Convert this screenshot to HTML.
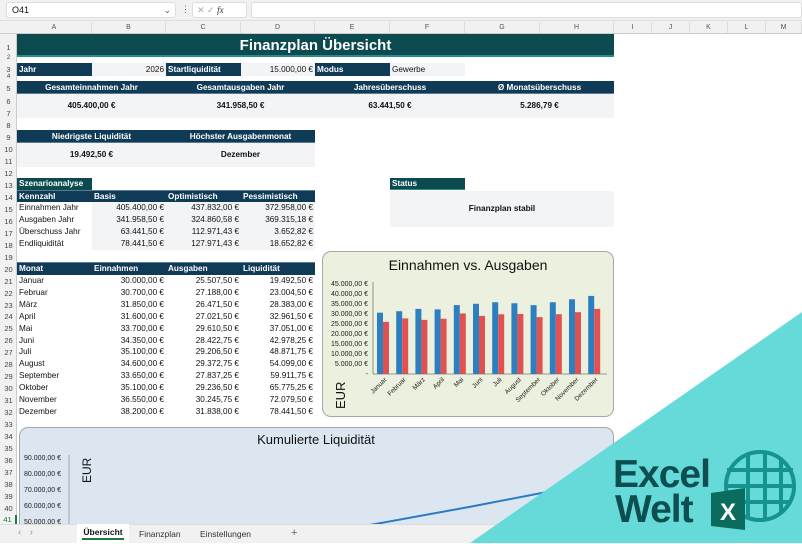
<!DOCTYPE html>
<html><head><meta charset="utf-8">
<style>
*{margin:0;padding:0;box-sizing:border-box}
body{width:802px;height:543px;overflow:hidden;background:#fff;font-family:"Liberation Sans",sans-serif;position:relative;font-size:8.2px;color:#111}
.a{position:absolute;white-space:nowrap}
.hd{background:#0f3b57;color:#fff;font-weight:bold}
.tl{background:#0b4a4f;color:#fff;font-weight:bold}
.g{background:#f3f4f6}
.r{text-align:right}
.c{text-align:center}
.rn{position:absolute;left:0;width:17px;text-align:center;font-size:7.5px;color:#444}
.ch{position:absolute;top:22px;height:11px;font-size:7px;color:#555;text-align:center;border-right:1px solid #ddd;line-height:11px}
</style></head><body>
<div class="a" style="left:0;top:0;width:802px;height:21px;background:#f1f1f1;border-bottom:1px solid #ddd"></div>
<div class="a" style="left:6px;top:2px;width:170px;height:16px;background:#fff;border:1px solid #ddd;border-radius:3px;font-size:9px;line-height:14px;padding-left:5px">O41<span style="position:absolute;right:4px;color:#555">&#8964;</span></div>
<div class="a" style="left:181px;top:4px;font-size:9px;color:#666">&#8942;</div>
<div class="a" style="left:192px;top:2px;width:55px;height:16px;background:#fff;border:1px solid #ddd;border-radius:3px;font-size:9px;line-height:14px;color:#aaa;padding-left:4px">✕ ✓ <i style="color:#333;font-family:'Liberation Serif'">fx</i></div>
<div class="a" style="left:251px;top:2px;width:551px;height:16px;background:#fff;border:1px solid #ddd;border-radius:3px"></div>
<div class="a" style="left:0;top:21px;width:802px;height:13px;background:#f1f1f1;border-bottom:1px solid #ccc"></div>
<div class="ch" style="left:17px;width:75px">A</div><div class="ch" style="left:92px;width:74px">B</div><div class="ch" style="left:166px;width:75px">C</div><div class="ch" style="left:241px;width:74px">D</div><div class="ch" style="left:315px;width:75px">E</div><div class="ch" style="left:390px;width:75px">F</div><div class="ch" style="left:465px;width:75px">G</div><div class="ch" style="left:540px;width:74px">H</div><div class="ch" style="left:614px;width:38px">I</div><div class="ch" style="left:652px;width:38px">J</div><div class="ch" style="left:690px;width:38px">K</div><div class="ch" style="left:728px;width:38px">L</div><div class="ch" style="left:766px;width:36px">M</div>
<div class="a" style="left:0;top:34px;width:17px;height:490px;background:#f1f1f1;border-right:1px solid #ccc"></div>
<div class="rn" style="top:43px">1</div><div class="rn" style="top:55px;font-size:6px">2</div><div class="rn" style="top:65px">3</div><div class="rn" style="top:74px;font-size:6px">4</div><div class="rn" style="top:84px">5</div><div class="rn" style="top:97px">6</div><div class="rn" style="top:109px">7</div><div class="rn" style="top:121px">8</div><div class="rn" style="top:133px">9</div><div class="rn" style="top:145px">10</div><div class="rn" style="top:157px">11</div><div class="rn" style="top:169px">12</div>
<div class="rn" style="top:181px">13</div><div class="rn" style="top:193px">14</div><div class="rn" style="top:205px">15</div><div class="rn" style="top:217px">16</div><div class="rn" style="top:229px">17</div><div class="rn" style="top:241px">18</div><div class="rn" style="top:253px">19</div><div class="rn" style="top:265px">20</div><div class="rn" style="top:277px">21</div><div class="rn" style="top:289px">22</div><div class="rn" style="top:301px">23</div><div class="rn" style="top:312px">24</div><div class="rn" style="top:324px">25</div><div class="rn" style="top:336px">26</div><div class="rn" style="top:348px">27</div><div class="rn" style="top:360px">28</div><div class="rn" style="top:372px">29</div><div class="rn" style="top:384px">30</div><div class="rn" style="top:396px">31</div><div class="rn" style="top:408px">32</div><div class="rn" style="top:420px">33</div><div class="rn" style="top:432px">34</div><div class="rn" style="top:444px">35</div><div class="rn" style="top:456px">36</div><div class="rn" style="top:468px">37</div><div class="rn" style="top:480px">38</div><div class="rn" style="top:492px">39</div><div class="rn" style="top:504px">40</div><div class="rn" style="top:515px;color:#1b7a3f;border-right:2px solid #1b7a3f">41</div>

<div class="a tl" style="left:17px;top:34px;width:597px;height:23px;font-size:15px;line-height:23px;text-align:center;border-bottom:2px solid #2a8c8c">Finanzplan Übersicht</div>
<div class="a g" style="left:17px;top:63px;width:448px;height:13px"></div>
<div class="a hd" style="left:17px;top:63px;width:75px;height:13px;line-height:13px;padding-left:2px">Jahr</div>
<div class="a r" style="left:92px;top:63px;width:72px;line-height:13px">2026</div>
<div class="a hd" style="left:166px;top:63px;width:75px;height:13px;line-height:13px;padding-left:2px">Startliquidität</div>
<div class="a r" style="left:241px;top:63px;width:72px;line-height:13px">15.000,00 €</div>
<div class="a hd" style="left:315px;top:63px;width:75px;height:13px;line-height:13px;padding-left:2px">Modus</div>
<div class="a" style="left:392px;top:63px;line-height:13px">Gewerbe</div>
<div class="a hd c" style="left:17px;top:81px;width:597px;height:13px;line-height:13px;border-bottom:1px solid #5a7a90"></div>
<div class="a g" style="left:17px;top:94px;width:597px;height:24px"></div>
<div class="a c" style="left:17px;top:82px;width:149px;color:#fff;font-weight:bold;line-height:12px">Gesamteinnahmen Jahr</div>
<div class="a c" style="left:166px;top:82px;width:149px;color:#fff;font-weight:bold;line-height:12px">Gesamtausgaben Jahr</div>
<div class="a c" style="left:315px;top:82px;width:150px;color:#fff;font-weight:bold;line-height:12px">Jahresüberschuss</div>
<div class="a c" style="left:465px;top:82px;width:149px;color:#fff;font-weight:bold;line-height:12px">Ø Monatsüberschuss</div>
<div class="a c" style="left:17px;top:101px;width:149px;font-weight:bold">405.400,00 €</div>
<div class="a c" style="left:166px;top:101px;width:149px;font-weight:bold">341.958,50 €</div>
<div class="a c" style="left:315px;top:101px;width:150px;font-weight:bold">63.441,50 €</div>
<div class="a c" style="left:465px;top:101px;width:149px;font-weight:bold">5.286,79 €</div>
<div class="a hd" style="left:17px;top:130px;width:298px;height:13px;border-bottom:1px solid #5a7a90"></div>
<div class="a g" style="left:17px;top:143px;width:298px;height:24px"></div>
<div class="a c" style="left:17px;top:131px;width:149px;color:#fff;font-weight:bold;line-height:12px">Niedrigste Liquidität</div>
<div class="a c" style="left:166px;top:131px;width:149px;color:#fff;font-weight:bold;line-height:12px">Höchster Ausgabenmonat</div>
<div class="a c" style="left:17px;top:150px;width:149px;font-weight:bold">19.492,50 €</div>
<div class="a c" style="left:166px;top:150px;width:149px;font-weight:bold">Dezember</div>
<div class="a tl" style="left:390px;top:178px;width:75px;height:12px;line-height:12px;padding-left:2px;border-bottom:1px solid #2a8c8c">Status</div>
<div class="a g c" style="left:390px;top:191px;width:224px;height:36px;line-height:36px;font-weight:bold">Finanzplan stabil</div>
<div class="a tl" style="left:17px;top:178px;width:75px;height:12px;line-height:12px;padding-left:2px">Szenarioanalyse</div>
<div class="a hd" style="left:17px;top:190px;width:298px;height:12px;border-top:1px solid #5a7a90"></div>
<div class="a g" style="left:92px;top:202px;width:223px;height:48px"></div>
<div class="a" style="left:19px;top:191px;color:#fff;font-weight:bold;line-height:11px">Kennzahl</div>
<div class="a" style="left:94px;top:191px;color:#fff;font-weight:bold;line-height:11px">Basis</div>
<div class="a" style="left:168px;top:191px;color:#fff;font-weight:bold;line-height:11px">Optimistisch</div>
<div class="a" style="left:243px;top:191px;color:#fff;font-weight:bold;line-height:11px">Pessimistisch</div>
<div class="a" style="left:19px;top:202px;line-height:12px">Einnahmen Jahr<br>Ausgaben Jahr<br>Überschuss Jahr<br>Endliquidität</div>
<div class="a r" style="left:92px;top:202px;width:72px;line-height:12px">405.400,00 €<br>341.958,50 €<br>63.441,50 €<br>78.441,50 €</div>
<div class="a r" style="left:166px;top:202px;width:73px;line-height:12px">437.832,00 €<br>324.860,58 €<br>112.971,43 €<br>127.971,43 €</div>
<div class="a r" style="left:241px;top:202px;width:72px;line-height:12px">372.958,00 €<br>369.315,18 €<br>3.652,82 €<br>18.652,82 €</div>
<div class="a hd" style="left:17px;top:262px;width:298px;height:13px;border-top:1px solid #5a7a90"></div>
<div class="a" style="left:19px;top:263px;color:#fff;font-weight:bold;line-height:12px">Monat</div>
<div class="a" style="left:94px;top:263px;color:#fff;font-weight:bold;line-height:12px">Einnahmen</div>
<div class="a" style="left:168px;top:263px;color:#fff;font-weight:bold;line-height:12px">Ausgaben</div>
<div class="a" style="left:243px;top:263px;color:#fff;font-weight:bold;line-height:12px">Liquidität</div>
<div class="a" style="left:19px;top:275px;line-height:11.9px">Januar<br>Februar<br>März<br>April<br>Mai<br>Juni<br>Juli<br>August<br>September<br>Oktober<br>November<br>Dezember</div>
<div class="a r" style="left:92px;top:275px;width:72px;line-height:11.9px">30.000,00 €<br>30.700,00 €<br>31.850,00 €<br>31.600,00 €<br>33.700,00 €<br>34.350,00 €<br>35.100,00 €<br>34.600,00 €<br>33.650,00 €<br>35.100,00 €<br>36.550,00 €<br>38.200,00 €</div>
<div class="a r" style="left:166px;top:275px;width:73px;line-height:11.9px">25.507,50 €<br>27.188,00 €<br>26.471,50 €<br>27.021,50 €<br>29.610,50 €<br>28.422,75 €<br>29.206,50 €<br>29.372,75 €<br>27.837,25 €<br>29.236,50 €<br>30.245,75 €<br>31.838,00 €</div>
<div class="a r" style="left:241px;top:275px;width:72px;line-height:11.9px">19.492,50 €<br>23.004,50 €<br>28.383,00 €<br>32.961,50 €<br>37.051,00 €<br>42.978,25 €<br>48.871,75 €<br>54.099,00 €<br>59.911,75 €<br>65.775,25 €<br>72.079,50 €<br>78.441,50 €</div>

<div class="a" style="left:322px;top:251px;width:292px;height:166px;background:#ebf1de;border:1px solid #a6a6a6;border-radius:9px"></div>
<svg class="a" style="left:322px;top:251px" width="292" height="166">
<text x="146" y="19" font-size="14" text-anchor="middle" font-family="Liberation Sans" fill="#111">Einnahmen vs. Ausgaben</text>
<g font-size="7" font-family="Liberation Sans" text-anchor="end" fill="#222">
<text x="46" y="35">45.000,00 €</text><text x="46" y="45">40.000,00 €</text><text x="46" y="55">35.000,00 €</text><text x="46" y="65">30.000,00 €</text><text x="46" y="75">25.000,00 €</text><text x="46" y="85">20.000,00 €</text><text x="46" y="95">15.000,00 €</text><text x="46" y="105">10.000,00 €</text><text x="46" y="115">5.000,00 €</text><text x="46" y="125">-</text>
</g>
<line x1="51" y1="31" x2="51" y2="123" stroke="#777" stroke-width="0.8"/>
<line x1="51" y1="123" x2="285" y2="123" stroke="#777" stroke-width="0.8"/>
<g id="bars"></g>
<text transform="translate(23,158) rotate(-90)" font-size="13" font-family="Liberation Sans" fill="#111">EUR</text>
<g id="lbl" font-size="6.5" font-family="Liberation Sans" fill="#222" text-anchor="end"></g>
</svg>

<div class="a" style="left:19px;top:427px;width:595px;height:110px;background:#dce6f1;border:1px solid #a6a6a6;border-radius:9px"></div>
<svg class="a" style="left:19px;top:427px" width="595" height="100">
<text x="297" y="17" font-size="13" text-anchor="middle" font-family="Liberation Sans" fill="#111">Kumulierte Liquidität</text>
<g font-size="7" font-family="Liberation Sans" fill="#222">
<text x="5" y="33">90.000,00 €</text><text x="5" y="49">80.000,00 €</text><text x="5" y="65">70.000,00 €</text><text x="5" y="81">60.000,00 €</text><text x="5" y="97">50.000,00 €</text>
</g>
<line x1="50" y1="28" x2="50" y2="100" stroke="#999" stroke-width="0.8"/>
<text transform="translate(72,56) rotate(-90)" font-size="12" font-family="Liberation Sans" fill="#111">EUR</text>
<polyline points="340,100 450,80 595,52" fill="none" stroke="#2a7bc4" stroke-width="2"/>
</svg>

<div class="a" style="left:0;top:524px;width:802px;height:19px;background:#f1f1f1;border-top:1px solid #ddd"></div>
<div class="a" style="left:18px;top:527px;font-size:10px;color:#999">&#8249; &nbsp; &#8250;</div>
<div class="a" style="left:77px;top:524px;width:52px;height:19px;background:#fff;font-size:8.5px;text-align:center;line-height:17px;font-weight:bold">Übersicht<div style="position:absolute;left:5px;right:5px;bottom:3px;height:2px;background:#1b7a3f"></div></div>
<div class="a" style="left:139px;top:524px;font-size:8.5px;line-height:20px;color:#333">Finanzplan</div>
<div class="a" style="left:200px;top:524px;font-size:8.5px;line-height:20px;color:#333">Einstellungen</div>
<div class="a" style="left:291px;top:524px;font-size:11px;line-height:19px;color:#666">+</div>

<svg class="a" style="left:0;top:0" width="802" height="543">
<polygon points="802,312 802,543 470,543" fill="#66d9d9"/>
<g fill="none" stroke="#149391" stroke-width="4">
<circle cx="760" cy="486" r="34"/>
<line x1="727" y1="470" x2="793" y2="470"/><line x1="727" y1="486" x2="793" y2="486"/><line x1="729" y1="502" x2="791" y2="502"/>
<line x1="748" y1="454" x2="748" y2="518"/><line x1="765" y1="452" x2="765" y2="520"/><line x1="781" y1="460" x2="781" y2="512"/>
</g>
<polygon points="711,493 745,488 745,530 711,526" fill="#0b6b5c"/>
<text x="728" y="520" font-size="24" font-weight="bold" text-anchor="middle" font-family="Liberation Sans" fill="#fff">X</text>
<text x="613" y="487" font-size="39" font-weight="bold" font-family="Liberation Sans" fill="#0d4f50" letter-spacing="-1">Excel</text>
<text x="615" y="522" font-size="39" font-weight="bold" font-family="Liberation Sans" fill="#0d4f50" letter-spacing="-1">Welt</text>
</svg>

<script>
var inc=[30000,30700,31850,31600,33700,34350,35100,34600,33650,35100,36550,38200];
var exp=[25507,27188,26471,27021,29610,28422,29206,29372,27837,29236,30245,31838];
var m=["Januar","Februar","März","April","Mai","Juni","Juli","August","September","Oktober","November","Dezember"];
var ns="http://www.w3.org/2000/svg",b=document.getElementById("bars"),l=document.getElementById("lbl");
var s=92/45000;
for(var i=0;i<12;i++){var x=55+i*19.2;
var r1=document.createElementNS(ns,"rect");r1.setAttribute("x",x);r1.setAttribute("width",6);r1.setAttribute("y",123-inc[i]*s);r1.setAttribute("height",inc[i]*s);r1.setAttribute("fill","#2e7fc0");b.appendChild(r1);
var r2=document.createElementNS(ns,"rect");r2.setAttribute("x",x+6);r2.setAttribute("width",6);r2.setAttribute("y",123-exp[i]*s);r2.setAttribute("height",exp[i]*s);r2.setAttribute("fill","#e05252");b.appendChild(r2);
var t=document.createElementNS(ns,"text");t.setAttribute("transform","translate("+(x+10)+",129) rotate(-45)");t.textContent=m[i];l.appendChild(t);}
</script>
</body></html>
